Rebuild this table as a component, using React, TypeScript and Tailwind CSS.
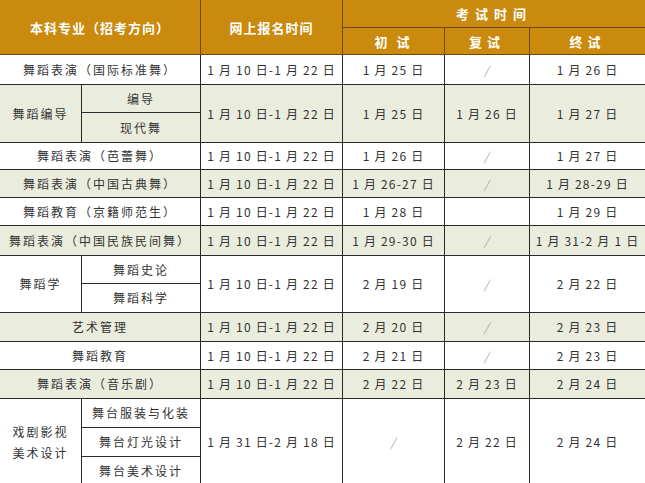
import React from "react";

const TINT = "bg-[#eaeddd]";
const WHITE = "bg-white";

const td = "border border-[#2a2a2a] text-center align-middle p-0 text-[12px] text-[#333]";
const zh = "tracking-[2px]";
const dt = "tracking-[1.2px]";
const slash = <span className="text-[#aaa] italic">/</span>;

type Row = {
  bg: string;
  h: number;
  name: string;
  reg: string;
  a: React.ReactNode;
  b: React.ReactNode;
  c: React.ReactNode;
};

function Single({ r }: { r: Row }) {
  return (
    <tr className={r.bg} style={{ height: r.h }}>
      <td colSpan={2} className={`${td} ${zh}`}>{r.name}</td>
      <td className={`${td} ${dt}`}>{r.reg}</td>
      <td className={`${td} ${dt}`}>{r.a}</td>
      <td className={`${td} ${dt}`}>{r.b}</td>
      <td className={`${td} ${dt}`}>{r.c}</td>
    </tr>
  );
}

const th = "border border-[#6b4a10] text-white text-[13px] font-bold align-middle";

export default function App() {
  const reg = "1 月 10 日-1 月 22 日";
  return (
    <div
      className="w-[645px] h-[483px] overflow-hidden bg-white"
      style={{ fontFamily: '"Noto Sans CJK SC", "Noto Sans", sans-serif' }}
    >
      <table className="w-[646px] border-collapse table-fixed ml-[-1px] mt-[-1px] leading-none">
        <colgroup>
          <col className="w-[82px]" />
          <col className="w-[119px]" />
          <col className="w-[142px]" />
          <col className="w-[102px]" />
          <col className="w-[85px]" />
          <col className="w-[116px]" />
        </colgroup>
        <thead>
          <tr className="bg-[#c98a0e] h-[28px]">
            <th colSpan={2} rowSpan={2} className={`${th} tracking-[1px]`}>
              本科专业（招考方向）
            </th>
            <th rowSpan={2} className={`${th} tracking-[1px]`}>
              网上报名时间
            </th>
            <th colSpan={3} className={`${th} tracking-[6px]`}>
              考试时间
            </th>
          </tr>
          <tr className="bg-[#c98a0e] h-[27px]">
            <th className={`${th} tracking-[3px] whitespace-pre`}>初 试</th>
            <th className={`${th} tracking-[5px]`}>复试</th>
            <th className={`${th} tracking-[5px]`}>终试</th>
          </tr>
        </thead>
        <tbody>
          <Single r={{ bg: WHITE, h: 30, name: "舞蹈表演（国际标准舞）", reg, a: "1 月 25 日", b: slash, c: "1 月 26 日" }} />

          <tr className={TINT} style={{ height: 28 }}>
            <td rowSpan={2} className={`${td} ${zh}`}>舞蹈编导</td>
            <td className={`${td} ${zh}`}>编导</td>
            <td rowSpan={2} className={`${td} ${dt}`}>{reg}</td>
            <td rowSpan={2} className={`${td} ${dt}`}>1 月 25 日</td>
            <td rowSpan={2} className={`${td} ${dt}`}>1 月 26 日</td>
            <td rowSpan={2} className={`${td} ${dt}`}>1 月 27 日</td>
          </tr>
          <tr className={TINT} style={{ height: 30 }}>
            <td className={`${td} ${zh}`}>现代舞</td>
          </tr>

          <Single r={{ bg: WHITE, h: 27, name: "舞蹈表演（芭蕾舞）", reg, a: "1 月 26 日", b: slash, c: "1 月 27 日" }} />
          <Single r={{ bg: TINT, h: 28, name: "舞蹈表演（中国古典舞）", reg, a: "1 月 26-27 日", b: slash, c: "1 月 28-29 日" }} />
          <Single r={{ bg: WHITE, h: 28, name: "舞蹈教育（京籍师范生）", reg, a: "1 月 28 日", b: "", c: "1 月 29 日" }} />
          <Single r={{ bg: TINT, h: 30, name: "舞蹈表演（中国民族民间舞）", reg, a: "1 月 29-30 日", b: slash, c: "1 月 31-2 月 1 日" }} />

          <tr className={WHITE} style={{ height: 28 }}>
            <td rowSpan={2} className={`${td} ${zh}`}>舞蹈学</td>
            <td className={`${td} ${zh}`}>舞蹈史论</td>
            <td rowSpan={2} className={`${td} ${dt}`}>{reg}</td>
            <td rowSpan={2} className={`${td} ${dt}`}>2 月 19 日</td>
            <td rowSpan={2} className={`${td} ${dt}`}>{slash}</td>
            <td rowSpan={2} className={`${td} ${dt}`}>2 月 22 日</td>
          </tr>
          <tr className={WHITE} style={{ height: 29 }}>
            <td className={`${td} ${zh}`}>舞蹈科学</td>
          </tr>

          <Single r={{ bg: TINT, h: 29, name: "艺术管理", reg, a: "2 月 20 日", b: slash, c: "2 月 23 日" }} />
          <Single r={{ bg: WHITE, h: 28, name: "舞蹈教育", reg, a: "2 月 21 日", b: slash, c: "2 月 23 日" }} />
          <Single r={{ bg: TINT, h: 29, name: "舞蹈表演（音乐剧）", reg, a: "2 月 22 日", b: "2 月 23 日", c: "2 月 24 日" }} />

          <tr className={WHITE} style={{ height: 29 }}>
            <td rowSpan={3} className={`${td} ${zh}`}>
              <div className="flex flex-col items-center gap-[9px] leading-[12px]">
                <span>戏剧影视</span>
                <span>美术设计</span>
              </div>
            </td>
            <td className={`${td} ${zh}`}>舞台服装与化装</td>
            <td rowSpan={3} className={`${td} ${dt}`}>1 月 31 日-2 月 18 日</td>
            <td rowSpan={3} className={`${td} ${dt}`}>{slash}</td>
            <td rowSpan={3} className={`${td} ${dt}`}>2 月 22 日</td>
            <td rowSpan={3} className={`${td} ${dt}`}>2 月 24 日</td>
          </tr>
          <tr className={WHITE} style={{ height: 29 }}>
            <td className={`${td} ${zh}`}>舞台灯光设计</td>
          </tr>
          <tr className={WHITE} style={{ height: 29 }}>
            <td className={`${td} ${zh}`}>舞台美术设计</td>
          </tr>
        </tbody>
      </table>
    </div>
  );
}
